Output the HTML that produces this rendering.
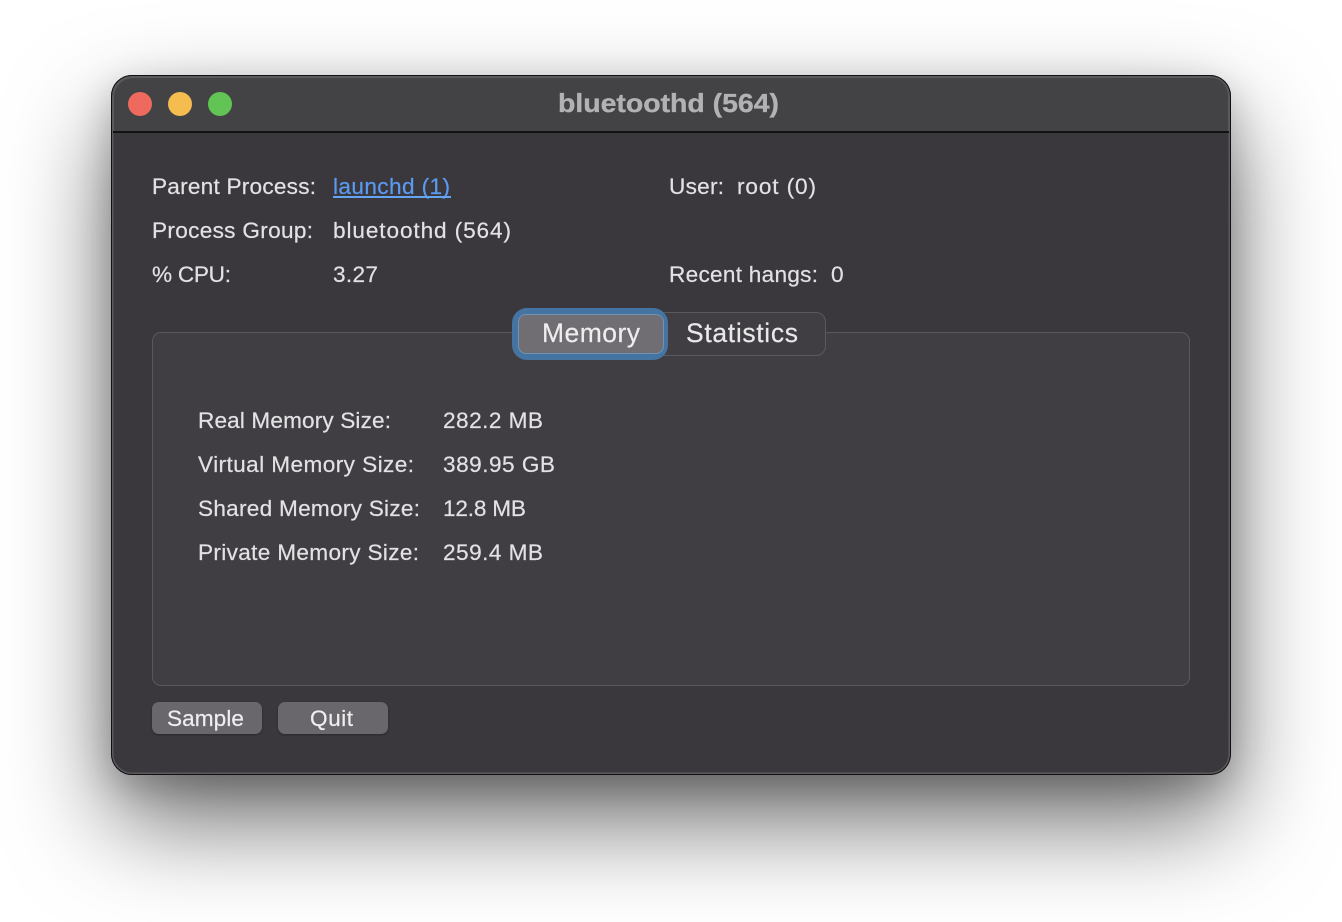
<!DOCTYPE html>
<html><head><meta charset="utf-8"><style>
html,body{margin:0;padding:0;width:1342px;height:922px;overflow:hidden;background:#fff}
.abs{position:absolute;box-sizing:border-box}
#win{left:111px;top:75px;width:1120px;height:700px;border-radius:21px;background:#3a383d;box-shadow:0 0 0 1px #101012 inset,0 0 0 2.5px #5a595c inset,0 46px 100px 0 rgba(0,0,0,.58),0 12px 36px rgba(0,0,0,.2);overflow:hidden}
#title{left:2px;top:2px;width:1116px;height:56px;background:#434245;border-bottom:2px solid #121214;border-radius:19px 19px 0 0;box-shadow:inset 1px 1px 0 #5a595c,inset -1px 0 0 #5a595c}
.dot{width:24px;height:24px;border-radius:50%}
svg{position:absolute;left:0;top:0}
text{font-family:"Liberation Sans",sans-serif;font-size:22.6px;fill:#e2e1e3;stroke:#e2e1e3;stroke-width:.2px}
</style></head><body>
<div class="abs" id="win"><div class="abs" id="title"></div></div>
<div class="abs dot" style="left:128px;top:92px;background:#ee6a5f"></div>
<div class="abs dot" style="left:168px;top:92px;background:#f5bd4f"></div>
<div class="abs dot" style="left:208px;top:92px;background:#61c454"></div>
<div class="abs" style="left:152px;top:332px;width:1038px;height:354px;border-radius:9px;background:#403e43;border:1.5px solid #59585b"></div>
<div class="abs" style="left:514px;top:312px;width:312px;height:44px;border-radius:10px;background:#403e43;border:1.5px solid #5a595c"></div>
<div class="abs" style="left:512px;top:308px;width:156px;height:52px;border-radius:15px;background:#4674a2"></div>
<div class="abs" style="left:518px;top:314px;width:146px;height:40px;border-radius:8px;background:#706e72;border:1.5px solid #6f93b5"></div>
<div class="abs" style="left:152px;top:702px;width:110px;height:32px;border-radius:7px;background:#69676b;box-shadow:0 1px 2px rgba(0,0,0,.3)"></div>
<div class="abs" style="left:278px;top:702px;width:110px;height:32px;border-radius:7px;background:#69676b;box-shadow:0 1px 2px rgba(0,0,0,.3)"></div>
<svg width="1342" height="922" viewBox="0 0 1342 922">
<text x="558" y="112" style="font-size:26px;font-weight:bold;fill:#b2b1b3;stroke:#b2b1b3;stroke-width:.35px" textLength="221" lengthAdjust="spacingAndGlyphs">bluetoothd (564)</text>
<text x="152" y="194" textLength="164">Parent Process:</text>
<text x="333" y="194" textLength="117" style="fill:#5a9af0;stroke:#5a9af0">launchd (1)</text>
<rect x="333" y="196" width="118" height="2" fill="#63a5f3"/>
<text x="669" y="194" textLength="55">User:</text>
<text x="737" y="194" textLength="79">root (0)</text>
<text x="152" y="238" textLength="161">Process Group:</text>
<text x="333" y="238" textLength="178">bluetoothd (564)</text>
<text x="152" y="282" textLength="79">% CPU:</text>
<text x="333" y="282" textLength="45">3.27</text>
<text x="669" y="282" textLength="149">Recent hangs:</text>
<text x="831" y="282" textLength="13">0</text>
<text x="542" y="342" style="font-size:26.5px;fill:#eeedef;stroke:#eeedef" textLength="98">Memory</text>
<text x="686" y="342" style="font-size:26.5px;fill:#e8e7e9;stroke:#e8e7e9" textLength="112">Statistics</text>
<text x="198" y="428" textLength="193">Real Memory Size:</text>
<text x="443" y="428" textLength="100">282.2 MB</text>
<text x="198" y="472" textLength="216">Virtual Memory Size:</text>
<text x="443" y="472" textLength="112">389.95 GB</text>
<text x="198" y="516" textLength="222">Shared Memory Size:</text>
<text x="443" y="516" textLength="83">12.8 MB</text>
<text x="198" y="560" textLength="221">Private Memory Size:</text>
<text x="443" y="560" textLength="100">259.4 MB</text>
<text x="167" y="726" style="fill:#eeedef;stroke:#eeedef" textLength="77">Sample</text>
<text x="310" y="726" style="fill:#eeedef;stroke:#eeedef" textLength="43">Quit</text>
</svg>
</body></html>
